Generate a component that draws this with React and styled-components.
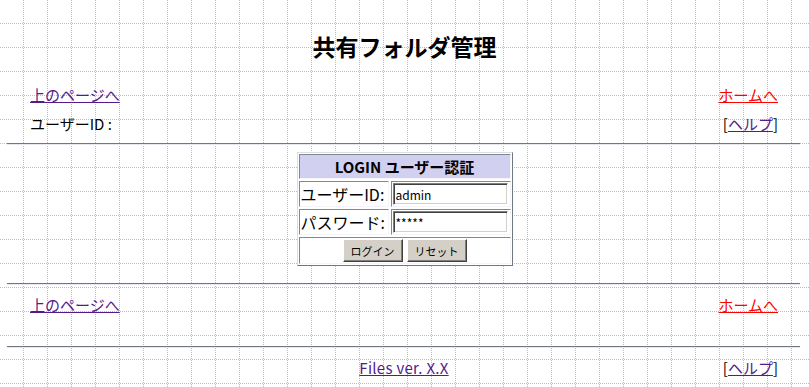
import styled, { createGlobalStyle } from "styled-components";

const GlobalStyle = createGlobalStyle`
  html, body {
    margin: 0;
    padding: 0;
  }
  body {
    min-height: 387px;
    background-color: #fff;
    /* dotted 24px grid, one dot every other pixel */
    background-image:
      conic-gradient(from 180deg at 1px 23px, #bdbdbd 0 25%, transparent 0 100%),
      conic-gradient(from 0deg at 23px 1px, #bdbdbd 0 25%, transparent 0 100%);
    background-size: 2px 24px, 24px 2px;
    font-family: "Noto Sans CJK JP", "Noto Sans", sans-serif;
    color: #000;
  }
`;

const Page = styled.div`
  padding-top: 26px;
`;

const Title = styled.h1`
  margin: 0;
  height: 40px;
  font-size: 23px;
  font-weight: bold;
  line-height: 40px;
  text-align: center;
`;

const Row = styled.div`
  display: flex;
  justify-content: space-between;
  align-items: center;
  height: 20px;
  margin-top: ${(p) => p.$gap}px;
  padding: 0 31px 0 30px;
  font-size: 15px;
  line-height: 20px;
`;

const FooterRow = styled(Row)`
  display: grid;
  grid-template-columns: 1fr auto 1fr;
`;

const Link = styled.a`
  color: ${(p) => (p.$red ? "#ff0000" : "#551a8b")};
  text-decoration: underline;
  cursor: pointer;
`;

const Version = styled(Link)`
  letter-spacing: 0.3px;
`;

const Help = styled.span`
  justify-self: end;
`;

const Rule = styled.div`
  height: 0;
  margin: ${(p) => p.$gap}px 9px 0 7px;
  border-top: 1px solid #6f7783;
  border-bottom: 1px solid #e6eaf0;
`;

const LoginBox = styled.form`
  display: grid;
  grid-template-columns: 90px 120px;
  grid-template-rows: 25px 26px 26px 27px;
  gap: 2px;
  width: 212px;
  margin: 7px auto 0;
  padding: 1px;
  background: #fff;
  border: 1px solid;
  border-color: #dcdce4 #6f7783 #6f7783 #dcdce4;
`;

const Cell = styled.div`
  display: flex;
  align-items: center;
  justify-content: ${(p) => (p.$center ? "center" : "flex-start")};
  gap: 4px;
  grid-column: ${(p) => (p.$span ? "1 / -1" : "auto")};
  padding: 0 1px;
  background: ${(p) => (p.$head ? "#d2d0f0" : "#fff")};
  border: 1px solid;
  border-color: #808890 #f4f4fa #f4f4fa #808890;
  font-size: ${(p) => (p.$head ? "15px" : "16px")};
  font-weight: ${(p) => (p.$head ? "bold" : "normal")};
  white-space: nowrap;
`;

const Field = styled.input`
  box-sizing: border-box;
  width: 115px;
  height: 22px;
  padding: 0 2px;
  background: #fff;
  border: 1px solid;
  border-color: #808080 #fff #fff #808080;
  box-shadow: inset 1px 1px #404040, inset -1px -1px #d4d0c8;
  font: 12px "Noto Sans CJK JP", sans-serif;
  color: #000;
  outline: none;
`;

const Button = styled.button`
  height: 23px;
  padding: 0 7px;
  background: #d4d0c8;
  border: 1px solid;
  border-color: #fff #404040 #404040 #fff;
  box-shadow: inset -1px -1px #808080;
  font: 11px "Noto Sans CJK JP", sans-serif;
  color: #000;
`;

function NavLinks({ gap }) {
  return (
    <Row $gap={gap}>
      <Link>上のページへ</Link>
      <Link $red>ホームへ</Link>
    </Row>
  );
}

export default function App() {
  return (
    <Page>
      <GlobalStyle />
      <Title>共有フォルダ管理</Title>
      <NavLinks gap={19} />
      <Row $gap={9}>
        <span>ユーザーID :</span>
        <span>
          [<Link>ヘルプ</Link>]
        </span>
      </Row>
      <Rule $gap={9} />
      <LoginBox onSubmit={(e) => e.preventDefault()}>
        <Cell $head $span $center>LOGIN ユーザー認証</Cell>
        <Cell>ユーザーID:</Cell>
        <Cell>
          <Field type="text" defaultValue="admin" />
        </Cell>
        <Cell>パスワード:</Cell>
        <Cell>
          <Field type="text" defaultValue="*****" />
        </Cell>
        <Cell $span $center>
          <Button type="submit">ログイン</Button>
          <Button type="reset">リセット</Button>
        </Cell>
      </LoginBox>
      <Rule $gap={17} />
      <NavLinks gap={10} />
      <Rule $gap={31} />
      <FooterRow $gap={10}>
        <span />
        <Version>Files ver. X.X</Version>
        <Help>
          [<Link>ヘルプ</Link>]
        </Help>
      </FooterRow>
    </Page>
  );
}
